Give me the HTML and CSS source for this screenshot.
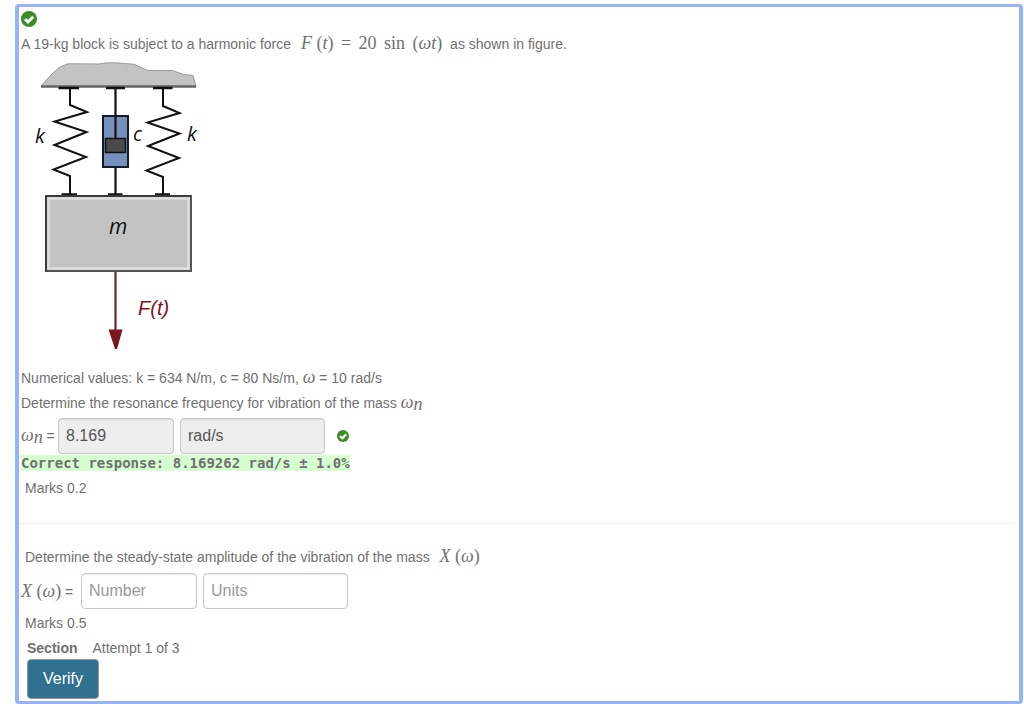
FILE: index.html
```html
<!DOCTYPE html>
<html lang="en">
<head>
    <meta charset="UTF-8">
    <meta name="viewport" content="width=device-width, initial-scale=1.0">
    <title>Harmonic force question</title>
    <link rel="stylesheet" href="styles.css">
</head>
<body>
    <form class="question">
        <div class="result">
            <svg class="tick" viewBox="0 0 16 16" role="img" aria-label="Correct">
                <circle cx="8" cy="8" r="8"/>
                <path d="M4 8.2 L7 11 L12.2 5.8"/>
            </svg>
        </div>

        <p class="line">A 19-kg block is subject to a harmonic force <span class="math math-wide"><i>F</i> (<i>t</i>) <span class="op">=</span> 20 <span class="op">sin</span> (<i>ωt</i>)</span> &nbsp;as shown in figure.</p>

        <!-- Spring / damper figure -->
        <svg class="figure" viewBox="21 60 180 302" role="img" aria-label="Mass on two springs and a damper">
            <path d="M41 86.500 C47 79 54 71 61 66.500 Q68 62.500 75 63.800 L99 64 C110 61.500 123 63.500 134 64.300 L148 70.500 H172 L184 74.500 L193 75.500 L196 86.500 Z" fill="#c3c3c3" stroke="#9a9a9a"/>
            <path d="M41 86.500 H196" stroke="#666" stroke-width="2.500"/>

            <g fill="none" stroke="#111" stroke-width="2">
                <path d="M58.500 88 H79 M106 88 H125 M153 88 H172.500" stroke-width="2.500"/>
                <path d="M70 88 V105 L87 112 L54.500 121.500 L86.500 132 L54.500 145 L86 157 L53.500 169.500 L70 176 V194"/>
                <path d="M163 88 V106 L179.500 113 L147.500 122.500 L179.500 133.500 L148 146 L179 158 L146.500 170.500 L163 177 V194"/>
                <path d="M61.500 194.500 H77 M108 194.500 H122.500 M155 194.500 H170" stroke-width="2.500"/>
            </g>

            <rect x="103" y="116" width="25" height="51" fill="#7590ba" stroke="#131b30" stroke-width="2"/>
            <path d="M115.500 88 V138 M115.500 167 V194" stroke="#111" stroke-width="2.200"/>
            <rect x="105.500" y="138.500" width="20" height="14" fill="#4a4a4a" stroke="#111" stroke-width="1.500"/>

            <rect x="46" y="196" width="145" height="75" fill="#c3c3c3" stroke="#555" stroke-width="2"/>
            <rect x="48.500" y="198.500" width="140" height="70" fill="none" stroke="#dedede" stroke-width="2.500"/>
            <path d="M46 272 V196 H191" fill="none" stroke="#222"/>

            <path d="M115.500 272 V331" stroke="#6b2630" stroke-width="2.200"/>
            <path d="M108.500 329.500 H122.500 L117 349 H115 Z" fill="#7b141d"/>

            <text class="fig-symbol" x="35" y="143">k</text>
            <text class="fig-symbol" x="133" y="141">c</text>
            <text class="fig-symbol" x="187" y="141">k</text>
            <text class="fig-mass" x="109" y="234">m</text>
            <text class="fig-force" x="138" y="315">F(t)</text>
        </svg>

        <p class="line">Numerical values: k = 634 N/m, c = 80 Ns/m, <i class="omega">ω</i> = 10 rad/s</p>
        <p class="line">Determine the resonance frequency for vibration of the mass <i class="omega">ω<sub>n</sub></i></p>

        <div class="answer">
            <label for="wn"><i class="omega">ω<sub>n</sub></i> =</label>
            <input class="number" type="text" id="wn" value="8.169" readonly>
            <input class="units" type="text" aria-label="Units of resonance frequency" value="rad/s" readonly>
            <svg class="tick tick-small" viewBox="0 0 16 16" role="img" aria-label="Correct">
                <circle cx="8" cy="8" r="8"/>
                <path d="M4 8.2 L7 11 L12.2 5.8"/>
            </svg>
        </div>
        <div class="feedback"><span>Correct response: 8.169262 rad/s ± 1.0%</span></div>
        <p class="line indent">Marks 0.2</p>

        <hr>

        <p class="line indent">Determine the steady-state amplitude of the vibration of the mass <span class="math math-wide"><i>X</i> (<i>ω</i>)</span></p>
        <div class="answer answer-open">
            <label for="xw"><span class="math"><i>X</i> (<i>ω</i>)</span> =</label>
            <input class="number" type="text" id="xw" placeholder="Number">
            <input class="units" type="text" aria-label="Units of amplitude" placeholder="Units">
        </div>

        <div class="section">
            <p class="line marks">Marks 0.5</p>
            <p class="line"><strong>Section</strong> <span class="attempt">Attempt 1 of 3</span></p>
            <button type="button">Verify</button>
        </div>
    </form>
</body>
</html>
```
FILE: styles.css
```css
* {
    box-sizing: border-box;
}
body {
    margin: 4px 1px 0 15px;
    background: #fff;
    color: #707070;
    font-family: "Liberation Sans", Arial, sans-serif;
    font-size: 14px;
}
.question {
    padding: 4px 4px 2px 2px;
    border: solid #98b2f8;
    border-width: 3px 4px;
    border-radius: 4px;
}

/* Text lines */
.line {
    margin: 0;
    line-height: 25px;
}
.indent {
    padding-left: 4px;
}
.math {
    font-family: "Liberation Serif", "Times New Roman", serif;
    font-size: 18px;
    line-height: 1;
}
.math-wide {
    margin-left: 6px;
}
.op {
    margin: 0 3px;
}
.omega {
    font-family: "Liberation Serif", "Times New Roman", serif;
    font-size: 18px;
    line-height: 1;
}
.omega sub {
    font-size: 18px;
    line-height: 1;
    vertical-align: -2px;
}

/* Correct marks */
.result {
    height: 21px;
}
.tick {
    display: block;
    width: 16px;
    height: 16px;
}
.tick circle {
    fill: #398d24;
}
.tick path {
    fill: none;
    stroke: #fff;
    stroke-width: 3;
}
.tick-small {
    width: 12px;
    height: 12px;
    margin-left: 6px;
}

/* Figure */
.figure {
    display: block;
    width: 180px;
    height: 302px;
    margin: 3px 0 4px;
}
.fig-symbol {
    font: italic 20px "Open Sans", sans-serif;
    fill: #111;
}
.fig-mass {
    font: italic 21px "Open Sans", sans-serif;
    fill: #111;
}
.fig-force {
    font: italic 20px "Liberation Sans", sans-serif;
    fill: #7b141d;
}

/* Answer rows */
.answer {
    display: flex;
    align-items: center;
    gap: 6px;
    margin-top: 2px;
}
.answer label {
    width: 31px;
    white-space: nowrap;
}
.answer-open {
    margin-top: 3px;
}
.answer-open label {
    width: 54px;
}
input {
    height: 36px;
    padding: 0 7px;
    border: 1px solid #c8c8c8;
    border-radius: 4px;
    background: #fff;
    color: #555;
    font-family: inherit;
    font-size: 16px;
    box-shadow: inset 0 1px 1px rgba(0, 0, 0, 0.08);
}
input::placeholder {
    color: #999;
}
input:read-only {
    background: #eee;
}
.number {
    width: 116px;
}
.units {
    width: 145px;
}
.feedback {
    height: 22px;
    font-family: "DejaVu Sans Mono", monospace;
    font-weight: bold;
    line-height: 19px;
}
.feedback span {
    background: #d5ffd0;
}
hr {
    margin: 22px 0 21px;
    border: 0;
    border-top: 1px solid #eee;
}

/* Attempt and submit */
.section {
    padding: 2px 0 0 6px;
}
.marks {
    margin-left: -2px;
}
.attempt {
    margin-left: 11px;
}
button {
    display: block;
    height: 40px;
    margin-top: -2px;
    padding: 0 15px;
    border: 1px solid #999;
    border-radius: 4px;
    background: #30718f;
    color: #fff;
    font-family: inherit;
    font-size: 16px;
    cursor: pointer;
}
```
